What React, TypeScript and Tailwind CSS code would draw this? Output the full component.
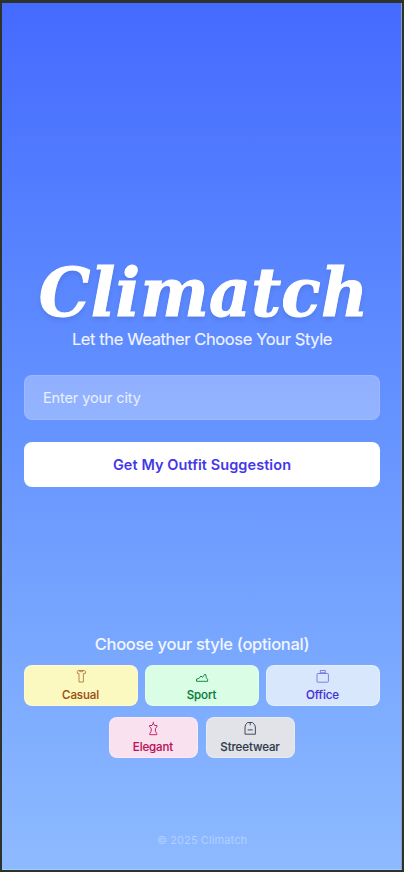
import type { ReactNode } from "react";

function Icon({ children, className = "" }: { children: ReactNode; className?: string }) {
  return (
    <svg
      width="16"
      height="16"
      viewBox="0 0 16 16"
      fill="none"
      stroke="currentColor"
      strokeWidth="0.9"
      className={`block ${className}`}
    >
      {children}
    </svg>
  );
}

function StyleCard({ label, className, children }: { label: string; className: string; children: ReactNode }) {
  return (
    <button
      className={`flex h-[41px] flex-col items-center rounded-lg border border-white/30 bg-clip-border pt-[3px] pr-px text-[11.5px] font-medium leading-[14px] tracking-[-0.1px] [-webkit-text-stroke:0.15px_currentColor] ${className}`}
    >
      {children}
      <span className="mt-[3px]">{label}</span>
    </button>
  );
}

export default function App() {
  return (
    <div className="h-[872px] w-[404px] bg-[#2d3328] pt-[3px] pr-[2px] pb-[2px] pl-[2px] font-['Inter','Liberation_Sans',sans-serif]">
      <main className="flex h-[867px] w-[400px] flex-col items-center overflow-hidden border-r border-b border-r-[#8f9dc4] border-b-[#a5c9fb] bg-linear-to-b from-[#456aff] to-[#8dbaff] pr-[21px] pl-[22px]">
        <h1 className="mt-[255px] ml-[3px] h-[69px] origin-center scale-x-[0.96] whitespace-nowrap font-['DejaVu_Serif',serif] text-[67.5px] font-bold italic leading-[70px] tracking-[0.2px] text-white [-webkit-text-stroke:1px_white] [text-shadow:0_3px_5px_rgba(0,0,0,0.11)]">
          Climatch
        </h1>
        <p className="h-6 whitespace-nowrap text-[16.5px] leading-6 tracking-[-0.38px] text-white/90 [-webkit-text-stroke:0.2px_rgba(255,255,255,0.6)]">
          Let the Weather Choose Your Style
        </p>
        <input
          placeholder="Enter your city"
          className="mt-6 h-[45px] w-full shrink-0 rounded-lg border border-white/10 bg-white/30 px-[18px] text-[14.5px] tracking-[-0.12px] text-white outline-none placeholder:text-white/80"
        />
        <button className="mt-[22px] h-[45px] w-full shrink-0 rounded-lg bg-white text-[14.5px] font-semibold tracking-[0.07px] text-[#4338e8]">
          Get My Outfit Suggestion
        </button>
        <h2 className="mt-[145px] h-6 whitespace-nowrap text-[16.5px] font-medium leading-6 tracking-[-0.3px] text-white/90">
          Choose your style (optional)
        </h2>
        <div className="mt-[9px] grid w-full grid-cols-3 gap-[7px]">
          <StyleCard label="Casual" className="bg-[#fcf9c0] text-[#994f12]">
            <Icon className="opacity-75">
              <path d="M5 1.5h6.2l1.3 1v1.8l-2.1.4v8.3H6V4.7L4.3 4.3V2.5L5 1.5Z" />
              <path d="m6 1.8.8.9h2.8l.8-.9" />
            </Icon>
          </StyleCard>
          <StyleCard label="Sport" className="bg-[#d9fee5] text-[#087b3b]">
            <Icon>
              <path d="M2.5 12.3V10l2.4-.5 2-2.5 1.6 1.4L11.1 5l1.1 2v1.6l1.4 1.7v2H2.5Z" />
            </Icon>
          </StyleCard>
          <StyleCard label="Office" className="bg-[#d9e7fd] text-[#4432d5]">
            <Icon className="opacity-65">
              <rect x="2" y="4.5" width="11.4" height="8.7" rx="0.8" />
              <path d="M5.3 4.5v-3h5v3" />
              <path d="M5.3 3.8h5" />
            </Icon>
          </StyleCard>
        </div>
        <div className="mt-[11px] flex gap-2">
          <StyleCard label="Elegant" className="w-[89px] bg-[#fae1ef] text-[#bc1158]">
            <Icon>
              <path d="M8.3.8v1.4L7 4.5H4.6v1.3l1.6 1.5v3l-1.4 2.2v1.2h7v-1.2l-1.4-2.2v-3L12 5.8V4.5H9.6L8.3 2.2" />
            </Icon>
          </StyleCard>
          <StyleCard label="Streetwear" className="w-[89px] bg-[#e1e3e9] text-[#303b4d]">
            <Icon>
              <path d="M5.5 1.5h5l2.1 2.2.8 2.3v7.2H3V6l.7-2.3 1.8-2.2ZM8.2 1.5v2.8M5.7 8.9h5" />
            </Icon>
          </StyleCard>
        </div>
        <footer className="mt-[74px] text-[11px] leading-4 tracking-[0.1px] text-white/35">© 2025 Climatch</footer>
      </main>
    </div>
  );
}
